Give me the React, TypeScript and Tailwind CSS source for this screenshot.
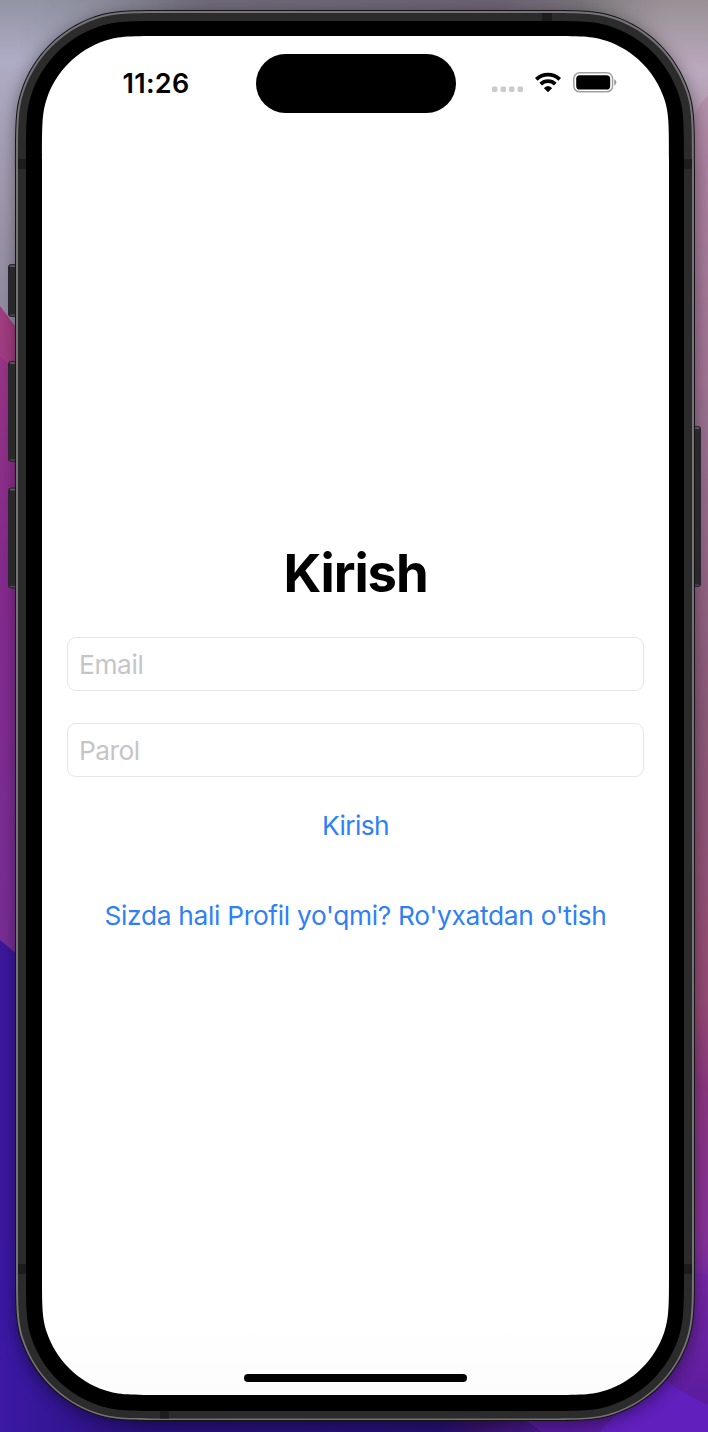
import React from "react";

// Rounded rectangle whose corners ease from the straight edge into a circular arc.
function squircle(x0: number, y0: number, x1: number, y1: number, r: number) {
  const a = 1.36 * r, b = 0.963 * r, c = 0.8372 * r;
  const d = 0.6827 * r, e = 0.0517 * r, f = 0.385 * r, g = 0.1513 * r;
  return [
    `M${x0 + a} ${y0}L${x1 - a} ${y0}`,
    `C${x1 - b} ${y0} ${x1 - c} ${y0} ${x1 - d} ${y0 + e}`,
    `C${x1 - f} ${y0 + g} ${x1 - g} ${y0 + f} ${x1 - e} ${y0 + d}`,
    `C${x1} ${y0 + c} ${x1} ${y0 + b} ${x1} ${y0 + a}`,
    `L${x1} ${y1 - a}`,
    `C${x1} ${y1 - b} ${x1} ${y1 - c} ${x1 - e} ${y1 - d}`,
    `C${x1 - g} ${y1 - f} ${x1 - f} ${y1 - g} ${x1 - d} ${y1 - e}`,
    `C${x1 - c} ${y1} ${x1 - b} ${y1} ${x1 - a} ${y1}`,
    `L${x0 + a} ${y1}`,
    `C${x0 + b} ${y1} ${x0 + c} ${y1} ${x0 + d} ${y1 - e}`,
    `C${x0 + f} ${y1 - g} ${x0 + g} ${y1 - f} ${x0 + e} ${y1 - d}`,
    `C${x0} ${y1 - c} ${x0} ${y1 - b} ${x0} ${y1 - a}`,
    `L${x0} ${y0 + a}`,
    `C${x0} ${y0 + b} ${x0} ${y0 + c} ${x0 + e} ${y0 + d}`,
    `C${x0 + g} ${y0 + f} ${x0 + f} ${y0 + g} ${x0 + d} ${y0 + e}`,
    `C${x0 + c} ${y0} ${x0 + b} ${y0} ${x0 + a} ${y0}Z`,
  ].join("");
}

function SideButton({ x, y, w, h }: { x: number; y: number; w: number; h: number }) {
  return (
    <g>
      <rect x={x} y={y} width={w} height={h} rx="2.5" fill="#29292a" stroke="#2c252f" strokeWidth="1" />
      <rect x={x + 1.5} y={y + 0.8} width={w - 3} height="1.6" fill="#626064" />
      <rect x={x + 1.5} y={y + h - 2} width={w - 3} height="1.2" fill="#514f53" />
    </g>
  );
}

function Device() {
  return (
    <svg className="absolute inset-0" width="708" height="1432" viewBox="0 0 708 1432" aria-hidden="true">
      <defs>
        <linearGradient id="top" x1="0" x2="1" y1="0" y2="0">
          <stop offset="0" stopColor="#9294a4" />
          <stop offset="0.3" stopColor="#6f6a78" />
          <stop offset="0.7" stopColor="#6b6272" />
          <stop offset="0.88" stopColor="#7f7b7f" />
          <stop offset="1" stopColor="#9c9097" />
        </linearGradient>
        <linearGradient id="left" x1="0" x2="0" y1="0" y2="400" gradientUnits="userSpaceOnUse">
          <stop offset="0" stopColor="#9294a4" />
          <stop offset="0.15" stopColor="#aeabc4" />
          <stop offset="0.5" stopColor="#a098ac" />
          <stop offset="1" stopColor="#85829a" />
        </linearGradient>
        <linearGradient id="magenta" x1="0" x2="0" y1="300" y2="960" gradientUnits="userSpaceOnUse">
          <stop offset="0" stopColor="#9c3883" />
          <stop offset="0.4" stopColor="#862b8f" />
          <stop offset="1" stopColor="#762e95" />
        </linearGradient>
        <linearGradient id="right" x1="0" x2="0" y1="0" y2="1432" gradientUnits="userSpaceOnUse">
          <stop offset="0" stopColor="#989094" />
          <stop offset="0.05" stopColor="#bbaabe" />
          <stop offset="0.12" stopColor="#a986a2" />
          <stop offset="0.3" stopColor="#986f8f" />
          <stop offset="0.5" stopColor="#8c5a78" />
          <stop offset="0.7" stopColor="#954b74" />
          <stop offset="0.76" stopColor="#8b367f" />
          <stop offset="0.87" stopColor="#85319a" />
          <stop offset="0.9" stopColor="#7426a8" />
          <stop offset="1" stopColor="#641fb8" />
        </linearGradient>
        <linearGradient id="bottom" x1="0" x2="1" y1="0" y2="0">
          <stop offset="0" stopColor="#3b19a4" />
          <stop offset="0.25" stopColor="#28107a" />
          <stop offset="0.73" stopColor="#251070" />
          <stop offset="0.8" stopColor="#37126a" />
          <stop offset="1" stopColor="#5a1ca8" />
        </linearGradient>
        <linearGradient id="fadeRight" x1="0" x2="1" y1="0" y2="0">
          <stop offset="0.1" stopColor="#fff" />
          <stop offset="1" stopColor="#000" />
        </linearGradient>
        <linearGradient id="fadeLeft" x1="0" x2="1" y1="0" y2="0">
          <stop offset="0" stopColor="#000" />
          <stop offset="0.7" stopColor="#fff" />
        </linearGradient>
        <mask id="leftMask"><rect width="180" height="1432" fill="url(#fadeRight)" /></mask>
        <mask id="rightMask"><rect x="580" width="128" height="1432" fill="url(#fadeLeft)" /></mask>
        <linearGradient id="corner" x1="0" x2="0" y1="1240" y2="1432" gradientUnits="userSpaceOnUse">
          <stop offset="0" stopColor="#7a29a4" />
          <stop offset="1" stopColor="#571a9e" />
        </linearGradient>
        <linearGradient id="glass" x1="0" x2="0" y1="0" y2="1">
          <stop offset="0.95" stopColor="#fff" />
          <stop offset="1" stopColor="#fcfcfc" />
        </linearGradient>
        <filter id="shade" x="-10%" y="-10%" width="120%" height="120%">
          <feGaussianBlur stdDeviation="8" />
        </filter>
      </defs>
      <rect width="708" height="1432" fill="url(#top)" />
      <rect width="180" height="1432" fill="url(#left)" mask="url(#leftMask)" />
      <rect x="580" width="128" height="1432" fill="url(#right)" mask="url(#rightMask)" />
      <path d="M708 95Q696 108 690 124V400H708Z" fill="#a86f92" opacity="0.3" />
      <path d="M0 306L20 333V960H0Z" fill="url(#magenta)" />
      <path d="M0 306L20 333V376L0 356Z" fill="#a54080" opacity="0.7" />
      <path d="M0 940L20 957V1432H0Z" fill="#3b189d" />
      <path d="M0 1240H600V1432H0Z" fill="url(#bottom)" />
      <path d="M524 1419L600 1340L660 1274H708V1432H542Z" fill="url(#corner)" />
      <path d="M655 1372Q680 1392 708 1405V1432H600Z" fill="#611fbd" />

      <path d={squircle(15, 14, 695, 1424, 116)} fill="#000" opacity="0.4" filter="url(#shade)" />

      <SideButton x={8.5} y={264.5} w={10} h={52} />
      <SideButton x={8.5} y={361.5} w={10} h={100} />
      <SideButton x={8.5} y={488} w={10} h={100} />
      <SideButton x={692} y={426.5} w={8.5} h={160} />

      <path d={squircle(15, 10, 695, 1421, 118)} fill="#151318" />
      <path d={squircle(16, 11, 694, 1420, 117)} fill="#757375" />
      <path d={squircle(18, 13, 692, 1418.5, 115)} fill="#2b2b2b" />
      <path d="M18 159H26V169H18ZM684 159H692V169H684ZM18 1264H26V1274H18ZM684 1264H692V1274H684ZM542 13H552V21H542ZM160 1411H169V1418.5H160Z" fill="#1c1c1c" />
      <path d={squircle(26, 21, 684, 1411, 107)} fill="#000" />
      <path d={squircle(42, 36, 669, 1395, 92)} fill="url(#glass)" />
    </svg>
  );
}

function Signal() {
  return (
    <svg width="32" height="24" viewBox="0 0 32 24" fill="#cbcbcb" aria-hidden="true">
      <rect x="0" y="15.5" width="5.5" height="5.5" rx="1.4" />
      <rect x="8.5" y="15.5" width="5.5" height="5.5" rx="1.4" />
      <rect x="17" y="15.5" width="5.5" height="5.5" rx="1.4" />
      <rect x="25.5" y="15.5" width="5.5" height="5.5" rx="1.4" />
    </svg>
  );
}

function Wifi() {
  return (
    <svg width="28" height="24" viewBox="0 0 28 24" fill="none" stroke="#000" aria-hidden="true">
      <path d="M2.3 8.3A17 17 0 0 1 25.7 8.3" strokeWidth="3.9" />
      <path d="M6.7 13.1A10.6 10.6 0 0 1 21.3 13.1" strokeWidth="3.7" />
      <path d="M10.4 17.1A5.6 5.6 0 0 1 17.6 17.1L14 20.8Z" fill="#000" stroke="#000" strokeWidth="0.9" strokeLinejoin="round" />
    </svg>
  );
}

function Battery() {
  return (
    <svg width="44" height="24" viewBox="0 0 44 24" fill="none" aria-hidden="true">
      <rect x="0.8" y="1.8" width="38.8" height="19" rx="5.8" stroke="#a0a0a0" strokeWidth="1.5" />
      <rect x="3.2" y="4.2" width="34" height="14.4" rx="3.7" fill="#000" />
      <path d="M41.3 8.2C44 9.3 44 13.3 41.3 14.4Z" fill="#999" />
    </svg>
  );
}

export default function App() {
  return (
    <div className="relative h-[1432px] w-[708px] overflow-hidden font-['Inter','Liberation_Sans',sans-serif]">
      <Device />
      <div className="relative flex h-full flex-col pr-[39px] pl-[42px] pt-9">
        <header className="flex h-[77px] items-start pt-[18px]">
          <div className="flex w-[213.6px] pt-[13px] pl-[80.5px] text-[27px] leading-[34px] font-semibold tracking-[0.3px] text-black">11:26</div>
          <div className="h-[58.5px] w-[200px] rounded-full bg-black" />
          <div className="flex pt-[17px] pl-[36.4px]">
            <Signal />
            <div className="w-[10px]" />
            <Wifi />
            <div className="w-[11px]" />
            <Battery />
          </div>
        </header>
        <main className="flex flex-col items-center px-[25px] pt-[427px]">
          <h1 className="h-[66px] text-[52.6px] leading-[66px] font-bold tracking-[-1.1px] text-black">Kirish</h1>
          <input
            type="email"
            placeholder="Email"
            className="mt-[31px] h-[54px] w-full rounded-[9px] border border-[#e6e6e6] bg-white px-[11px] text-[26.3px] tracking-[-0.4px] outline-none placeholder:text-[#c5c5c7] placeholder:opacity-100"
          />
          <input
            type="password"
            placeholder="Parol"
            className="mt-8 h-[54px] w-full rounded-[9px] border border-[#e6e6e6] bg-white px-[11px] text-[26.3px] tracking-[-0.5px] outline-none placeholder:text-[#c5c5c7] placeholder:opacity-100"
          />
          <button className="mt-8 h-[34px] text-[26.3px] leading-[34px] tracking-[-0.6px] text-[#2f80f6]">Kirish</button>
          <button className="mt-14 h-[34px] text-[26.3px] leading-[34px] tracking-[-0.3px] whitespace-nowrap text-[#2f80f6]">
            Sizda hali Profil yo'qmi? Ro'yxatdan o'tish
          </button>
        </main>
        <div className="mt-auto mb-[50px] h-2 w-[223px] self-center rounded-full bg-black" />
      </div>
    </div>
  );
}
